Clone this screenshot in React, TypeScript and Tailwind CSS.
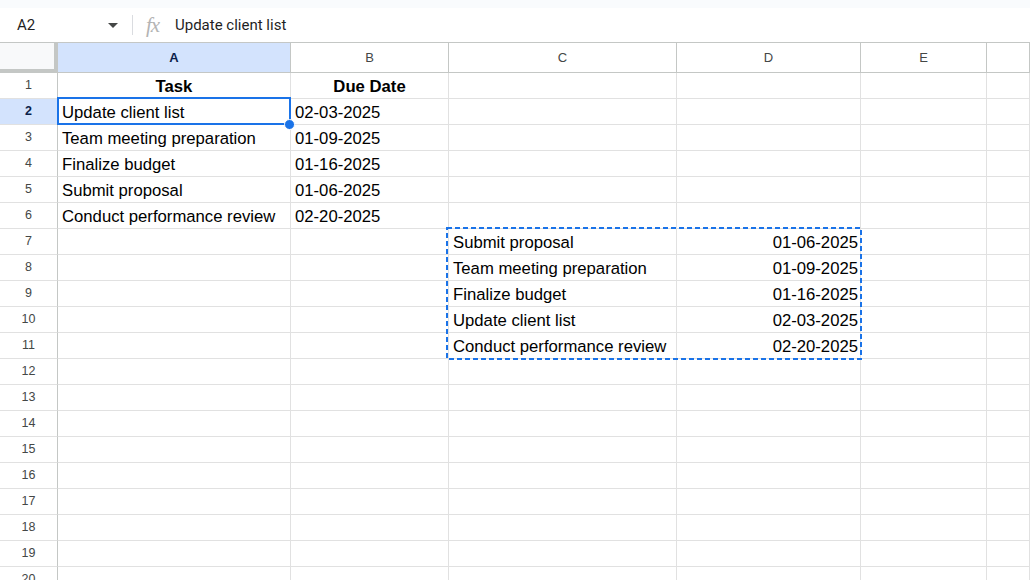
import React from "react";

const colW = ["w-[233px]", "w-[158px]", "w-[228px]", "w-[184px]", "w-[126px]", "w-[43px]"];
const letters = ["A", "B", "C", "D", "E", ""];

type Cell = { t: string; bold?: boolean; align?: "l" | "c" | "r" };
const data: Record<number, Record<number, Cell>> = {
  1: { 0: { t: "Task", bold: true, align: "c" }, 1: { t: "Due Date", bold: true, align: "c" } },
  2: { 0: { t: "Update client list" }, 1: { t: "02-03-2025" } },
  3: { 0: { t: "Team meeting preparation" }, 1: { t: "01-09-2025" } },
  4: { 0: { t: "Finalize budget" }, 1: { t: "01-16-2025" } },
  5: { 0: { t: "Submit proposal" }, 1: { t: "01-06-2025" } },
  6: { 0: { t: "Conduct performance review" }, 1: { t: "02-20-2025" } },
  7: { 2: { t: "Submit proposal" }, 3: { t: "01-06-2025", align: "r" } },
  8: { 2: { t: "Team meeting preparation" }, 3: { t: "01-09-2025", align: "r" } },
  9: { 2: { t: "Finalize budget" }, 3: { t: "01-16-2025", align: "r" } },
  10: { 2: { t: "Update client list" }, 3: { t: "02-03-2025", align: "r" } },
  11: { 2: { t: "Conduct performance review" }, 3: { t: "02-20-2025", align: "r" } },
};

const rows = Array.from({ length: 20 }, (_, i) => i + 1);

export default function App() {
  return (
    <div className="relative w-[1030px] h-[580px] overflow-hidden bg-white font-['Liberation_Sans',Arial,sans-serif]">
      <div className="h-[8px] bg-[#f9fbfd]" />
      <div className="h-[35px] border-b border-[#c4c7c5] flex items-center font-['Roboto',sans-serif] text-[15px] text-[#1f1f1f]">
        <div className="w-[100px] pl-[17px]">A2</div>
        <svg width="10" height="5" viewBox="0 0 10 5" className="ml-[8px]">
          <path d="M0 0 L10 0 L5 5 Z" fill="#444746" />
        </svg>
        <div className="ml-[14px] w-px h-[20px] bg-[#dadce0]" />
        <span className="ml-[13px] w-[19px] italic font-['Liberation_Serif',serif] text-[21px] text-[#b4b4b4] tracking-[-1px] leading-none">fx</span>
        <span className="ml-[10px] text-[#1f1f1f]">Update client list</span>
      </div>
      {/* column header */}
      <div className="flex h-[30px]">
        <div className="w-[58px] h-[30px] bg-[#f8f9fa] border-r-4 border-b-4 border-[#c4c7c5]" />
        {colW.map((w, i) => (
          <div
            key={i}
            className={`${w} h-[30px] border-r border-b border-[#c4c7c5] flex items-center justify-center text-[13px] ${
              i === 0 ? "bg-[#d3e3fd] text-[#0b1f4a] font-bold" : "bg-white text-[#444746]"
            }`}
          >
            {letters[i]}
          </div>
        ))}
      </div>
      {rows.map((r) => (
        <div key={r} className="flex h-[26px]">
          <div
            className={`w-[58px] h-[26px] border-r border-b flex items-center justify-center text-[12.5px] ${
              r === 2
                ? "bg-[#d3e3fd] text-[#0b1f4a] font-bold border-r-[#c4c7c5] border-b-[#e1e1e1]"
                : "bg-white text-[#444746] border-r-[#c4c7c5] border-b-[#e1e1e1]"
            }`}
          >
            {r}
          </div>
          {colW.map((w, i) => {
            const c = data[r]?.[i];
            return (
              <div
                key={i}
                className={`${w} h-[26px] border-r border-b border-[#e1e1e1] flex items-center pt-[2px] text-[16.7px] text-black whitespace-nowrap overflow-visible ${
                  c?.align === "c" ? "justify-center" : c?.align === "r" ? "justify-end pr-[2px]" : "pl-[4px]"
                } ${c?.bold ? "font-bold" : ""}`}
              >
                {c?.t}
              </div>
            );
          })}
        </div>
      ))}
      {/* selection A2 */}
      <div className="absolute left-[57px] top-[97px] w-[234px] h-[28px] border-2 border-[#1a73e8] pointer-events-none" />
      <div className="absolute left-[284px] top-[119px] w-[11px] h-[11px] rounded-full bg-[#1a73e8] border border-white" />
      {/* copy marquee */}
      <svg className="absolute left-[446px] top-[227px]" width="416" height="133">
        <rect x="1" y="1" width="414" height="131" fill="none" stroke="#1a73e8" strokeWidth="2" strokeDasharray="5 3" />
      </svg>
    </div>
  );
}
